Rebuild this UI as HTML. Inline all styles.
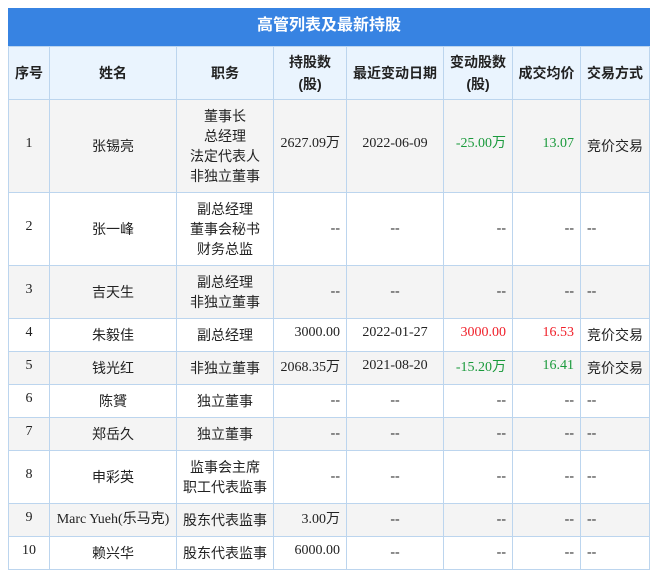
<!DOCTYPE html>
<html><head><meta charset="utf-8"><style>
body{margin:0;background:#fff;width:650px;height:578px;overflow:hidden;font-family:"Liberation Serif","Noto Sans CJK SC",serif;}
.t{position:absolute;left:8px;top:8px;width:642px;height:38px;background:#3783e2;color:#fff;font:bold 16px "Liberation Sans","Noto Sans CJK SC",sans-serif;text-align:center;line-height:36px;}
table{position:absolute;left:8px;top:46px;border-collapse:collapse;table-layout:fixed;width:641px;font-size:14px;color:#222;}
td{border:1px solid #bcd5ee;padding:0 6px;text-align:center;vertical-align:middle;line-height:20px;}
th{border:1px solid #bcd5ee;background:#eaf4fe;font:bold 14px "Liberation Sans","Noto Sans CJK SC",sans-serif;color:#222;line-height:22px;padding:0}
.c{font-family:"Liberation Sans","Noto Sans CJK SC",sans-serif;font-size:14px}
.r{text-align:right}.l{text-align:left}
.g td{background:#f4f4f4}
.gr{color:#1a9a3c}.rd{color:#f0202a}
.n{vertical-align:middle;padding-bottom:4px}
</style></head><body>
<div class="t">高管列表及最新持股</div>
<table>
<colgroup><col style="width:41px"><col style="width:127px"><col style="width:97px"><col style="width:73px"><col style="width:97px"><col style="width:69px"><col style="width:68px"><col style="width:69px"></colgroup>
<tr style="height:53px"><th>序号</th><th>姓名</th><th>职务</th><th>持股数<br>(股)</th><th>最近变动日期</th><th>变动股数<br>(股)</th><th>成交均价</th><th>交易方式</th></tr>
<tr class="g" style="height:93px"><td class="n">1</td><td class="c">张锡亮</td><td class="c">董事长<br>总经理<br>法定代表人<br>非独立董事</td><td class="r n">2627.09万</td><td class="n">2022-06-09</td><td class="r n gr">-25.00万</td><td class="r n gr">13.07</td><td class="l c">竞价交易</td></tr>
<tr style="height:73px"><td class="n">2</td><td class="c">张一峰</td><td class="c">副总经理<br>董事会秘书<br>财务总监</td><td class="r">--</td><td>--</td><td class="r">--</td><td class="r">--</td><td class="l">--</td></tr>
<tr class="g" style="height:53px"><td class="n">3</td><td class="c">吉天生</td><td class="c">副总经理<br>非独立董事</td><td class="r">--</td><td>--</td><td class="r">--</td><td class="r">--</td><td class="l">--</td></tr>
<tr style="height:33px"><td class="n">4</td><td class="c">朱毅佳</td><td class="c">副总经理</td><td class="r n">3000.00</td><td class="n">2022-01-27</td><td class="r n rd">3000.00</td><td class="r n rd">16.53</td><td class="l c">竞价交易</td></tr>
<tr class="g" style="height:33px"><td class="n">5</td><td class="c">钱光红</td><td class="c">非独立董事</td><td class="r">2068.35万</td><td class="n">2021-08-20</td><td class="r gr">-15.20万</td><td class="r n gr">16.41</td><td class="l c">竞价交易</td></tr>
<tr style="height:33px"><td class="n">6</td><td class="c">陈贇</td><td class="c">独立董事</td><td class="r">--</td><td>--</td><td class="r">--</td><td class="r">--</td><td class="l">--</td></tr>
<tr class="g" style="height:33px"><td class="n">7</td><td class="c">郑岳久</td><td class="c">独立董事</td><td class="r">--</td><td>--</td><td class="r">--</td><td class="r">--</td><td class="l">--</td></tr>
<tr style="height:53px"><td class="n">8</td><td class="c">申彩英</td><td class="c">监事会主席<br>职工代表监事</td><td class="r">--</td><td>--</td><td class="r">--</td><td class="r">--</td><td class="l">--</td></tr>
<tr class="g" style="height:33px"><td class="n">9</td><td style="padding:0;white-space:nowrap">Marc Yueh(乐马克)</td><td class="c" style="padding:0">股东代表监事</td><td class="r">3.00万</td><td>--</td><td class="r">--</td><td class="r">--</td><td class="l">--</td></tr>
<tr style="height:33px"><td class="n">10</td><td class="c">赖兴华</td><td class="c" style="padding:0">股东代表监事</td><td class="r n">6000.00</td><td>--</td><td class="r">--</td><td class="r">--</td><td class="l">--</td></tr>
</table>
</body></html>
